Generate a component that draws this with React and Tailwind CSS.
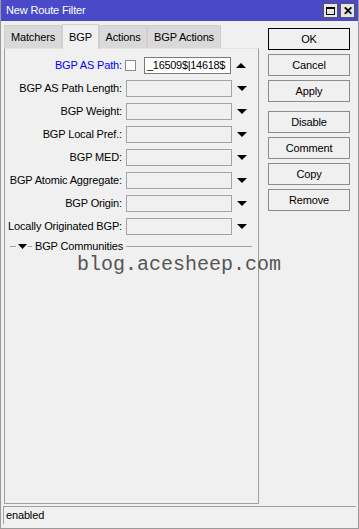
import React from "react";

const font = { fontFamily: '"Liberation Sans", Arial, sans-serif' };

const DownArrow = () => (
  <svg width="10" height="6" viewBox="0 0 10 6" className="block">
    <polygon points="0,0 10,0 5,5" fill="#000" />
  </svg>
);

const UpArrow = () => (
  <svg width="10" height="6" viewBox="0 0 10 6" className="block">
    <polygon points="0,5 10,5 5,0" fill="#000" />
  </svg>
);

const rows = [
  "BGP AS Path Length:",
  "BGP Weight:",
  "BGP Local Pref.:",
  "BGP MED:",
  "BGP Atomic Aggregate:",
  "BGP Origin:",
  "Locally Originated BGP:",
];

const buttons1 = ["OK", "Cancel", "Apply"];
const buttons2 = ["Disable", "Comment", "Copy", "Remove"];

const Btn = ({ label, primary }) => (
  <button
    className={
      primary
        ? "w-[82px] h-[22px] border border-black bg-[#f0f0f0] text-[11px] tracking-[-0.15px] text-black"
        : "w-[82px] h-[22px] border border-[#8c8c8c] bg-[#f0f0f0] text-[11px] tracking-[-0.15px] text-black"
    }
  >
    {label}
  </button>
);

export default function App() {
  return (
    <div
      className="relative w-[359px] h-[529px] bg-[#f0f0f0] border-x border-b border-[#9a9a9a] flex flex-col overflow-hidden"
      style={font}
    >
      {/* title bar */}
      <div className="h-[21px] bg-[#4a4ac9] flex items-center justify-between pl-[5px] pr-[3px]">
        <span className="text-white text-[11px] tracking-[-0.15px]">New Route Filter</span>
        <div className="flex gap-[2px]">
          <div className="w-[15px] h-[15px] bg-[#e6e6e6] border border-[#555] flex items-center justify-center">
            <div className="w-[9px] h-[8px] border border-black border-t-2" />
          </div>
          <div className="w-[15px] h-[15px] bg-[#e6e6e6] border border-[#555] flex items-center justify-center text-[12px] font-bold leading-none text-black">
            ✕
          </div>
        </div>
      </div>

      <div className="flex flex-1">
        {/* left side */}
        <div className="flex flex-col pl-[3px] pt-[2px] w-[258px]">
          <div className="flex items-end h-[25px] text-[11px] tracking-[-0.15px] text-black">
            <div className="h-[23px] w-[58px] bg-[#d9d9d9] border border-[#cfcfcf] border-b-0 flex items-center justify-center">
              Matchers
            </div>
            <div className="h-[25px] w-[37px] bg-[#f0f0f0] border border-[#d0d0d0] border-b-0 flex items-center justify-center -mb-px z-10">
              BGP
            </div>
            <div className="h-[23px] w-[48px] bg-[#d9d9d9] border border-[#cfcfcf] border-b-0 flex items-center justify-center">
              Actions
            </div>
            <div className="h-[23px] w-[74px] bg-[#d9d9d9] border border-[#cfcfcf] border-b-0 flex items-center justify-center">
              BGP Actions
            </div>
          </div>

          <div className="h-[456px] border border-[#a0a0a0] border-t-[#e3e3e3] flex flex-col pt-[5px] text-[11px] tracking-[-0.15px] text-black">
            {/* first row */}
            <div className="h-[23px] flex items-center">
              <div className="w-[117px] text-right text-[#0000ff]">BGP AS Path:</div>
              <div className="ml-[3px] w-[11px] h-[11px] bg-white border border-[#8a8a8a]" />
              <div className="ml-[8px] w-[87px] h-[17px] bg-white border border-[#7a7a7a] flex items-center pl-[2px] tracking-[-0.3px]">
                _16509$|14618$
              </div>
              <div className="ml-[5px]">
                <UpArrow />
              </div>
            </div>
            {rows.map((r) => (
              <div key={r} className="h-[23px] flex items-center">
                <div className="w-[117px] text-right">{r}</div>
                <div className="ml-[4px] w-[106px] h-[17px] bg-[#f0f0f0] border border-[#a3a3a3]" />
                <div className="ml-[5px]">
                  <DownArrow />
                </div>
              </div>
            ))}
            <div className="h-[17px] flex items-center">
              <div className="ml-[5px] w-[6px] h-px bg-[#a0a0a0]" />
              <div className="ml-[2px]">
                <svg width="9" height="6" viewBox="0 0 9 6" className="block">
                  <polygon points="0,0 9,0 4.5,5" fill="#000" />
                </svg>
              </div>
              <div className="ml-px w-[4px] h-px bg-[#a0a0a0]" />
              <span className="ml-[3px]">BGP Communities</span>
              <div className="ml-[3px] flex-1 mr-[6px] h-px bg-[#a0a0a0]" />
            </div>
          </div>
        </div>

        {/* right buttons */}
        <div className="flex flex-col pl-[9px] pt-[7px]">
          <div className="flex flex-col gap-[4px]">
            {buttons1.map((b) => (
              <Btn key={b} label={b} primary={b === "OK"} />
            ))}
          </div>
          <div className="flex flex-col gap-[4px] mt-[9px]">
            {buttons2.map((b) => (
              <Btn key={b} label={b} />
            ))}
          </div>
        </div>
      </div>

      {/* status bar */}
      <div className="mx-[2px] mb-[4px] h-[18px] border-t border-l border-[#a0a0a0] flex items-center pl-[2px] text-[11px] tracking-[-0.15px] text-black">
        enabled
      </div>

      {/* watermark */}
      <div
        className="absolute left-[76px] top-[255px] text-[20px] text-[#555] leading-none pointer-events-none"
        style={{ fontFamily: '"Liberation Mono", "Courier New", monospace' }}
      >
        blog.acesheep.com
      </div>
    </div>
  );
}
